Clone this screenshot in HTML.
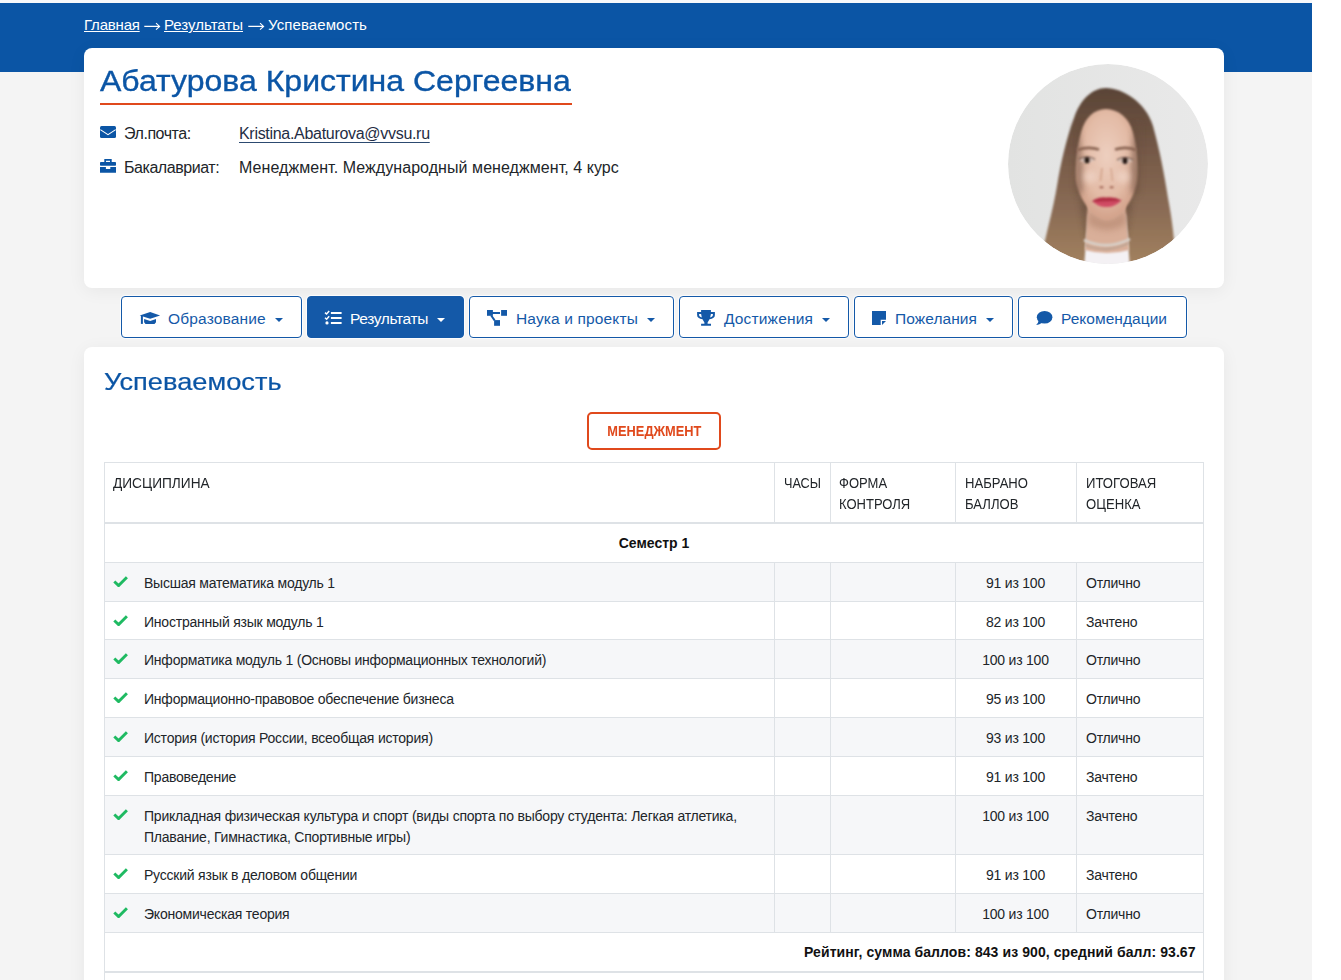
<!DOCTYPE html>
<html lang="ru">
<head>
<meta charset="utf-8">
<title>Успеваемость</title>
<style>
*{box-sizing:border-box;margin:0;padding:0}
html,body{width:1341px;height:980px;overflow:hidden;background:#fff;font-family:"Liberation Sans",sans-serif;color:#212529}
.abs{position:absolute}
.page{position:absolute;left:0;top:0;width:1312px;height:980px;background:#f4f4f4}
.strip{position:absolute;left:0;top:0;width:1312px;height:3px;background:#f8f8fa}
.hdr{position:absolute;left:0;top:3px;width:1312px;height:69px;background:#0b55a5}
.crumbs{position:absolute;left:84px;top:16px;font-size:15px;color:#fff;white-space:nowrap;line-height:18px}
.crumbs a{color:#fff;text-decoration:underline}
.card{position:absolute;background:#fff;border-radius:8px;box-shadow:0 3px 18px rgba(0,0,0,.055)}
.c1{left:84px;top:48px;width:1140px;height:240px}
.c2{left:84px;top:347px;width:1140px;height:700px}
.name{position:absolute;left:100px;top:63px;width:472px;font-size:29px;-webkit-text-stroke:0.35px #0b55a5;color:#0b55a5;white-space:nowrap;line-height:36px;height:42px;border-bottom:2px solid #e0491c}
.row{position:absolute;left:100px;font-size:16px;white-space:nowrap;color:#212529;line-height:20px;height:20px}
.row .ic{position:absolute;left:0;top:-2px}
.row .lb{position:absolute;left:24px;top:0}
.row .vl2{position:absolute;left:139px;top:0}
.row a{color:#1f2d44;text-decoration:underline;text-decoration-color:#2c4a70;text-underline-offset:2.5px}
.photo{position:absolute;left:1008px;top:64px;width:200px;height:200px;border-radius:50%;overflow:hidden;background:#e7e8e7}
.nav{position:absolute;top:296px;height:42px;border:1px solid #1459a8;border-radius:4px;background:#fff;color:#1459a8;font-size:16px;white-space:nowrap;box-shadow:0 0 0 1px rgba(255,255,255,.8)}
.nav.on{background:#1459a8;color:#fff}
.nav svg{position:absolute}
.nt{position:absolute;top:309px;line-height:20px;font-size:15.5px;color:#1459a8;white-space:nowrap}
.caret{position:absolute;top:318px;width:0;height:0;border-left:4px solid transparent;border-right:4px solid transparent;border-top:4px solid #1459a8}
h2{position:absolute;left:104px;top:367px;font-size:24px;transform:scaleX(1.135);transform-origin:0 0;-webkit-text-stroke:0.2px #0b55a5;font-weight:normal;color:#0b55a5;line-height:30px;white-space:nowrap}
.mgmt{position:absolute;left:587px;top:412px;width:134px;height:38px;border:2px solid #e0491c;border-radius:5px;color:#e0491c;font-weight:bold;font-size:14px;text-align:center;line-height:35px}
.mgmt span{display:inline-block;transform:scaleX(0.915);transform-origin:50% 50%}
.stripe{position:absolute;left:105px;width:1098px;background:#f6f7f9}
.hl{position:absolute;left:104px;width:1100px;height:1px;background:#dee2e6}
.vl{position:absolute;width:1px;background:#dee2e6}
.th,.td{position:absolute;font-size:14px;letter-spacing:-0.22px;line-height:21px;white-space:nowrap;color:#212529}
.th{font-size:14px;letter-spacing:0;transform-origin:0 0}
.sc{width:119px;text-align:center}
.sem{position:absolute;font-size:14px;font-weight:bold;line-height:21px;text-align:center;color:#111}
.rating{position:absolute;left:104px;width:1091.6px;text-align:right;font-size:14px;letter-spacing:0.08px;font-weight:bold;line-height:21px;color:#111}
.chk{position:absolute}
</style>
</head>
<body>
<div class="page"></div>
<div class="strip"></div>
<div class="hdr"></div>
<div class="crumbs" style="left:84px;letter-spacing:-0.2px"><a>Главная</a></div>
<svg class="abs" style="left:144px;top:22px" width="17" height="8" viewBox="0 0 17 8"><path d="M0.3 4.4 H15.6 M12 1.2 L15.6 4.4 L12 7.6" fill="none" stroke="#fff" stroke-width="1.1"/></svg>
<div class="crumbs" style="left:164px"><a>Результаты</a></div>
<svg class="abs" style="left:248px;top:22px" width="17" height="8" viewBox="0 0 17 8"><path d="M0.3 4.4 H15.6 M12 1.2 L15.6 4.4 L12 7.6" fill="none" stroke="#fff" stroke-width="1.1"/></svg>
<div class="crumbs" style="left:268px;letter-spacing:0.1px">Успеваемость</div>

<div class="card c1"></div>
<div class="name"><span style="display:inline-block;transform:scaleX(1.104);transform-origin:0 0;width:426.5px">Абатурова Кристина Сергеевна</span></div>
<div class="row" style="top:124px">
  <svg class="ic" width="16" height="20" viewBox="0 0 16 20"><rect x="0" y="4" width="16" height="12" rx="1.5" fill="#0b55a5"/><path d="M0.3 7.6 L8 12.7 L15.7 7.6" fill="none" stroke="#fff" stroke-width="1.1"/></svg>
  <span class="lb" style="letter-spacing:-0.45px">Эл.почта:</span><span class="vl2" style="letter-spacing:-0.3px"><a>Kristina.Abaturova@vvsu.ru</a></span>
</div>
<div class="row" style="top:158px">
  <svg class="ic" width="16" height="20" viewBox="0 0 16 20"><path d="M4.3 3 H11.7 V6 H10 V4.8 H6 V6 H4.3Z" fill="#0b55a5"/><rect x="0" y="6" width="16" height="3.8" rx="0.8" fill="#0b55a5"/><path d="M0 11 H5.9 V13 H10.3 V11 H16 V16.7 H0Z" fill="#0b55a5"/></svg>
  <span class="lb" style="letter-spacing:-0.45px">Бакалавриат:</span><span class="vl2" style="letter-spacing:0.06px">Менеджмент. Международный менеджмент, 4 курс</span>
</div>
<svg class="photo" width="200" height="200" viewBox="0 0 200 200" style="background:none">
<defs>
<filter id="b1" x="-20%" y="-20%" width="140%" height="140%"><feGaussianBlur stdDeviation="1.3"/></filter>
<filter id="b2" x="-50%" y="-50%" width="200%" height="200%"><feGaussianBlur stdDeviation="3"/></filter>
<filter id="b3" x="-50%" y="-50%" width="200%" height="200%"><feGaussianBlur stdDeviation="0.8"/></filter>
<filter id="b4" x="-50%" y="-50%" width="200%" height="200%"><feGaussianBlur stdDeviation="1.8"/></filter>
<clipPath id="cc"><circle cx="100" cy="100" r="100"/></clipPath>
<linearGradient id="hg" x1="0" y1="0" x2="0" y2="1"><stop offset="0" stop-color="#5a4436"/><stop offset=".35" stop-color="#755947"/><stop offset=".7" stop-color="#8c6d56"/><stop offset="1" stop-color="#a4835f"/></linearGradient>
<linearGradient id="bgg" x1="0" y1="0" x2="1" y2="0"><stop offset="0" stop-color="#e2e3e2"/><stop offset="1" stop-color="#e9e9e9"/></linearGradient>
<radialGradient id="fg" cx=".5" cy=".42" r=".62"><stop offset="0" stop-color="#edcfbf"/><stop offset=".6" stop-color="#e3bba6"/><stop offset="1" stop-color="#cf9c84"/></radialGradient>
</defs>
<g clip-path="url(#cc)">
<rect width="200" height="200" fill="url(#bgg)"/>
<path d="M52 192 Q100 176 148 192 L148 200 L52 200Z" fill="#f4f1f4"/>
<path filter="url(#b1)" fill="url(#hg)" d="M98 24 C84 24 72 36 66 54 C58 76 53 98 49 122 C45 146 39 166 35 186 L44 204 L76 204 L80 150 L118 150 L122 204 L168 204 C167 182 165 160 160 134 C156 108 152 88 145 62 C138 38 114 24 98 24Z"/>
<path filter="url(#b2)" fill="#5a4435" opacity=".55" d="M74 60 C68 95 70 140 80 178 L90 178 C82 140 78 95 82 60Z M122 60 C128 95 126 140 116 178 L106 178 C114 140 118 95 114 60Z"/>
<path filter="url(#b1)" d="M80 138 L117 138 L121 186 Q99 192 77 186Z" fill="#d9af99"/>
<path filter="url(#b2)" d="M80 145 Q99 165 118 145 L118 160 Q99 172 80 160Z" fill="#b88a73" opacity=".7"/>
<path filter="url(#b1)" d="M98 45 C86 45 77 54 73 68 C69 82 67 100 68 116 C70 134 84 154 99 156 C114 154 127 134 129 116 C130 100 129 82 125 68 C121 54 110 45 98 45Z" fill="url(#fg)"/>
<path filter="url(#b2)" d="M70 60 C72 80 76 100 74 130 L68 130 L66 60Z M127 60 C125 80 122 100 124 130 L131 130 L132 60Z" fill="#6a5040" opacity=".6"/>
<ellipse filter="url(#b2)" cx="82" cy="113" rx="7" ry="6" fill="#f3dcd0" opacity=".6"/>
<ellipse filter="url(#b2)" cx="115" cy="113" rx="7" ry="6" fill="#f3dcd0" opacity=".6"/>
<g filter="url(#b3)">
<path d="M69.5 86 Q80 82 91 85.5" stroke="#8a6553" stroke-width="2.8" fill="none"/>
<path d="M107 85.5 Q118 82 128 86" stroke="#8a6553" stroke-width="2.8" fill="none"/>
<path d="M71.5 96.5 Q79 90.5 86.5 96.5 Q79 100.5 71.5 96.5Z" fill="#d9c2b8"/>
<path d="M109.5 97 Q117 91 124.5 97 Q117 101 109.5 97Z" fill="#d9c2b8"/>
<circle cx="79" cy="96.2" r="3.1" fill="#2e211c"/>
<circle cx="117" cy="96.8" r="3.1" fill="#2e211c"/>
<path d="M71 95.5 Q79 90 87 95.5" stroke="#5e443a" stroke-width="1.1" fill="none"/>
<path d="M109 96 Q117 90.5 125 96" stroke="#5e443a" stroke-width="1.1" fill="none"/>
<path d="M94 104 L92.5 117" stroke="#d6a992" stroke-width="2" fill="none"/>
<path d="M103 104 L104.5 117" stroke="#d6a992" stroke-width="1.6" fill="none"/>
<ellipse cx="93.5" cy="123.2" rx="2" ry="1.2" fill="#a9715f"/>
<ellipse cx="103.6" cy="123.2" rx="2" ry="1.2" fill="#a9715f"/>
<path d="M83.5 137.5 Q91 132.5 98 133.5 Q106 132.5 114 136.5 Q106 139 98 139 Q91 139 83.5 137.5Z" fill="#b22d45"/>
<path d="M85.5 138 Q98 137.5 113 137 Q106 143.5 98 143 Q90 143 85.5 138Z" fill="#d04c64"/>
</g>
<path filter="url(#b3)" d="M76 176 Q99 187 122 175" stroke="#d7cfc7" stroke-width="3" fill="none"/>
<path filter="url(#b3)" d="M77 181 Q99 190 121 179" stroke="#a99b8f" stroke-width="1.3" fill="none"/>
</g>
</svg>

<div class="nav" style="left:121px;width:181px"></div>
<div class="nav on" style="left:307px;width:157px"></div>
<div class="nav" style="left:469px;width:205px"></div>
<div class="nav" style="left:679px;width:170px"></div>
<div class="nav" style="left:854px;width:159px"></div>
<div class="nav" style="left:1018px;width:169px"></div>
<svg class="abs" style="left:139px;top:311px" width="22" height="13" viewBox="0 0 22 13"><path d="M0.7 4.5 L11.2 0.9 L21.1 4.5 L11.2 7.7Z" fill="#1459a8"/><path d="M5.1 8 L11.2 10 L17 8 V11.2 L15.5 12.9 H6.5 L5.1 11.2Z" fill="#1459a8"/><rect x="1.9" y="5" width="2" height="7.9" fill="#1459a8"/></svg>
<div class="nt" style="left:168px;letter-spacing:0.16px">Образование</div><i class="caret" style="left:275px"></i>
<svg class="abs" style="left:324px;top:310px" width="18" height="15" viewBox="0 0 18 15"><path d="M1 2.6 L2.6 4 L5.2 1" fill="none" stroke="#fff" stroke-width="1.5"/><path d="M1 7.8 L2.6 9.2 L5.2 6.2" fill="none" stroke="#fff" stroke-width="1.5"/><circle cx="3" cy="12.9" r="1.6" fill="#fff"/><rect x="6.9" y="2" width="10.7" height="2" fill="#fff"/><rect x="6.9" y="7" width="10.7" height="2" fill="#fff"/><rect x="6.9" y="12" width="10.7" height="2" fill="#fff"/></svg>
<div class="nt" style="left:350px;color:#fff;letter-spacing:-0.36px">Результаты</div><i class="caret" style="left:437px;border-top-color:#fff"></i>
<svg class="abs" style="left:486px;top:309px" width="22" height="17" viewBox="0 0 22 17"><rect x="1" y="1" width="5.9" height="5.8" fill="#1459a8"/><rect x="15.1" y="1" width="5.9" height="5.8" fill="#1459a8"/><rect x="8.1" y="11.1" width="5.9" height="5.7" fill="#1459a8"/><rect x="6" y="3" width="8" height="2" fill="#1459a8"/><path d="M5.2 6.5 L8.6 11.3" stroke="#1459a8" stroke-width="2"/></svg>
<div class="nt" style="left:516px;letter-spacing:0.14px">Наука и проекты</div><i class="caret" style="left:647px"></i>
<svg class="abs" style="left:696px;top:309px" width="20" height="17" viewBox="0 0 20 17"><path d="M5.1 1 H14.9 V3 H18.9 V6 C18.9 8.6 17 9.5 13.5 10.3 L11.6 13.5 V14.8 L15 14.8 V16.7 H5.1 V14.8 L8.4 14.8 V13.5 L6.5 10.3 C3 9.5 1.1 8.6 1.1 6 V3 H5.1Z M3.1 5 V6 C3.1 7.3 4.2 8 5.8 8.4 L5.1 5Z M16.9 5 H14.9 L14.2 8.4 C15.8 8 16.9 7.3 16.9 6Z" fill="#1459a8" fill-rule="evenodd"/></svg>
<div class="nt" style="left:724px;letter-spacing:0.16px">Достижения</div><i class="caret" style="left:822px"></i>
<svg class="abs" style="left:871px;top:310px" width="16" height="16" viewBox="0 0 16 16"><path d="M1 1 H15 V9.7 H9.7 V15 H1Z" fill="#1459a8"/><path d="M11 11 H15 L11 15Z" fill="#1459a8"/></svg>
<div class="nt" style="left:895px;letter-spacing:0.08px">Пожелания</div><i class="caret" style="left:986px"></i>
<svg class="abs" style="left:1035px;top:310px" width="18" height="16" viewBox="0 0 18 16"><ellipse cx="9.6" cy="7.3" rx="7.8" ry="6.3" fill="#1459a8"/><path d="M3.5 10.5 C3.5 12.5 2.5 13.7 1 14.8 C3.5 14.8 5.5 14 7 12.5Z" fill="#1459a8"/></svg>
<div class="nt" style="left:1061px;letter-spacing:0.04px">Рекомендации</div>

<div class="card c2"></div>
<h2>Успеваемость</h2>
<div class="mgmt"><span>МЕНЕДЖМЕНТ</span></div>
<div class="stripe" style="top:563px;height:38px"></div>
<div class="stripe" style="top:640px;height:38px"></div>
<div class="stripe" style="top:718px;height:38px"></div>
<div class="stripe" style="top:796px;height:58px"></div>
<div class="stripe" style="top:894px;height:38px"></div>
<div class="hl" style="top:462px"></div>
<div class="hl" style="top:522px;height:2px"></div>
<div class="hl" style="top:562px"></div>
<div class="hl" style="top:601px"></div>
<div class="hl" style="top:639px"></div>
<div class="hl" style="top:678px"></div>
<div class="hl" style="top:717px"></div>
<div class="hl" style="top:756px"></div>
<div class="hl" style="top:795px"></div>
<div class="hl" style="top:854px"></div>
<div class="hl" style="top:893px"></div>
<div class="hl" style="top:932px"></div>
<div class="hl" style="top:971px;height:2px"></div>
<div class="vl" style="left:104px;top:462px;height:520px"></div>
<div class="vl" style="left:1203px;top:462px;height:520px"></div>
<div class="vl" style="left:774px;top:462px;height:61px"></div>
<div class="vl" style="left:774px;top:562px;height:370px"></div>
<div class="vl" style="left:830px;top:462px;height:61px"></div>
<div class="vl" style="left:830px;top:562px;height:370px"></div>
<div class="vl" style="left:955px;top:462px;height:61px"></div>
<div class="vl" style="left:955px;top:562px;height:370px"></div>
<div class="vl" style="left:1076px;top:462px;height:61px"></div>
<div class="vl" style="left:1076px;top:562px;height:370px"></div>
<div class="th" style="left:113px;top:473px;transform:scaleX(.978)">ДИСЦИПЛИНА</div>
<div class="th" style="left:784px;top:473px;transform:scaleX(.905)">ЧАСЫ</div>
<div class="th" style="left:839px;top:473px;transform:scaleX(.93)">ФОРМА<br>КОНТРОЛЯ</div>
<div class="th" style="left:965px;top:473px;transform:scaleX(.935)">НАБРАНО<br>БАЛЛОВ</div>
<div class="th" style="left:1086px;top:473px;transform:scaleX(.937)">ИТОГОВАЯ<br>ОЦЕНКА</div>
<div class="sem" style="left:104px;top:533px;width:1100px">Семестр 1</div>
<svg class="chk" style="left:113px;top:576px" width="15" height="11" viewBox="0 0 15 11"><path d="M1.3 5.5 L5.6 9.6 L13.9 1.3" fill="none" stroke="#1fba62" stroke-width="2.9" stroke-linecap="butt" stroke-linejoin="miter"/></svg>
<div class="td" style="left:144px;top:572.5px">Высшая математика модуль 1</div>
<div class="td sc" style="left:956px;top:572.5px">91 из 100</div>
<div class="td" style="left:1086px;top:572.5px">Отлично</div>
<svg class="chk" style="left:113px;top:615px" width="15" height="11" viewBox="0 0 15 11"><path d="M1.3 5.5 L5.6 9.6 L13.9 1.3" fill="none" stroke="#1fba62" stroke-width="2.9" stroke-linecap="butt" stroke-linejoin="miter"/></svg>
<div class="td" style="left:144px;top:611.5px">Иностранный язык модуль 1</div>
<div class="td sc" style="left:956px;top:611.5px">82 из 100</div>
<div class="td" style="left:1086px;top:611.5px">Зачтено</div>
<svg class="chk" style="left:113px;top:653px" width="15" height="11" viewBox="0 0 15 11"><path d="M1.3 5.5 L5.6 9.6 L13.9 1.3" fill="none" stroke="#1fba62" stroke-width="2.9" stroke-linecap="butt" stroke-linejoin="miter"/></svg>
<div class="td" style="left:144px;top:649.5px">Информатика модуль 1 (Основы информационных технологий)</div>
<div class="td sc" style="left:956px;top:649.5px">100 из 100</div>
<div class="td" style="left:1086px;top:649.5px">Отлично</div>
<svg class="chk" style="left:113px;top:692px" width="15" height="11" viewBox="0 0 15 11"><path d="M1.3 5.5 L5.6 9.6 L13.9 1.3" fill="none" stroke="#1fba62" stroke-width="2.9" stroke-linecap="butt" stroke-linejoin="miter"/></svg>
<div class="td" style="left:144px;top:688.5px">Информационно-правовое обеспечение бизнеса</div>
<div class="td sc" style="left:956px;top:688.5px">95 из 100</div>
<div class="td" style="left:1086px;top:688.5px">Отлично</div>
<svg class="chk" style="left:113px;top:731px" width="15" height="11" viewBox="0 0 15 11"><path d="M1.3 5.5 L5.6 9.6 L13.9 1.3" fill="none" stroke="#1fba62" stroke-width="2.9" stroke-linecap="butt" stroke-linejoin="miter"/></svg>
<div class="td" style="left:144px;top:727.5px">История (история России, всеобщая история)</div>
<div class="td sc" style="left:956px;top:727.5px">93 из 100</div>
<div class="td" style="left:1086px;top:727.5px">Отлично</div>
<svg class="chk" style="left:113px;top:770px" width="15" height="11" viewBox="0 0 15 11"><path d="M1.3 5.5 L5.6 9.6 L13.9 1.3" fill="none" stroke="#1fba62" stroke-width="2.9" stroke-linecap="butt" stroke-linejoin="miter"/></svg>
<div class="td" style="left:144px;top:766.5px">Правоведение</div>
<div class="td sc" style="left:956px;top:766.5px">91 из 100</div>
<div class="td" style="left:1086px;top:766.5px">Зачтено</div>
<svg class="chk" style="left:113px;top:809px" width="15" height="11" viewBox="0 0 15 11"><path d="M1.3 5.5 L5.6 9.6 L13.9 1.3" fill="none" stroke="#1fba62" stroke-width="2.9" stroke-linecap="butt" stroke-linejoin="miter"/></svg>
<div class="td" style="left:144px;top:805.5px">Прикладная физическая культура и спорт (виды спорта по выбору студента: Легкая атлетика,<br>Плавание, Гимнастика, Спортивные игры)</div>
<div class="td sc" style="left:956px;top:805.5px">100 из 100</div>
<div class="td" style="left:1086px;top:805.5px">Зачтено</div>
<svg class="chk" style="left:113px;top:868px" width="15" height="11" viewBox="0 0 15 11"><path d="M1.3 5.5 L5.6 9.6 L13.9 1.3" fill="none" stroke="#1fba62" stroke-width="2.9" stroke-linecap="butt" stroke-linejoin="miter"/></svg>
<div class="td" style="left:144px;top:864.5px">Русский язык в деловом общении</div>
<div class="td sc" style="left:956px;top:864.5px">91 из 100</div>
<div class="td" style="left:1086px;top:864.5px">Зачтено</div>
<svg class="chk" style="left:113px;top:907px" width="15" height="11" viewBox="0 0 15 11"><path d="M1.3 5.5 L5.6 9.6 L13.9 1.3" fill="none" stroke="#1fba62" stroke-width="2.9" stroke-linecap="butt" stroke-linejoin="miter"/></svg>
<div class="td" style="left:144px;top:903.5px">Экономическая теория</div>
<div class="td sc" style="left:956px;top:903.5px">100 из 100</div>
<div class="td" style="left:1086px;top:903.5px">Отлично</div>
<div class="rating" style="top:942px">Рейтинг, сумма баллов: 843 из 900, средний балл: 93.67</div></body></html>
